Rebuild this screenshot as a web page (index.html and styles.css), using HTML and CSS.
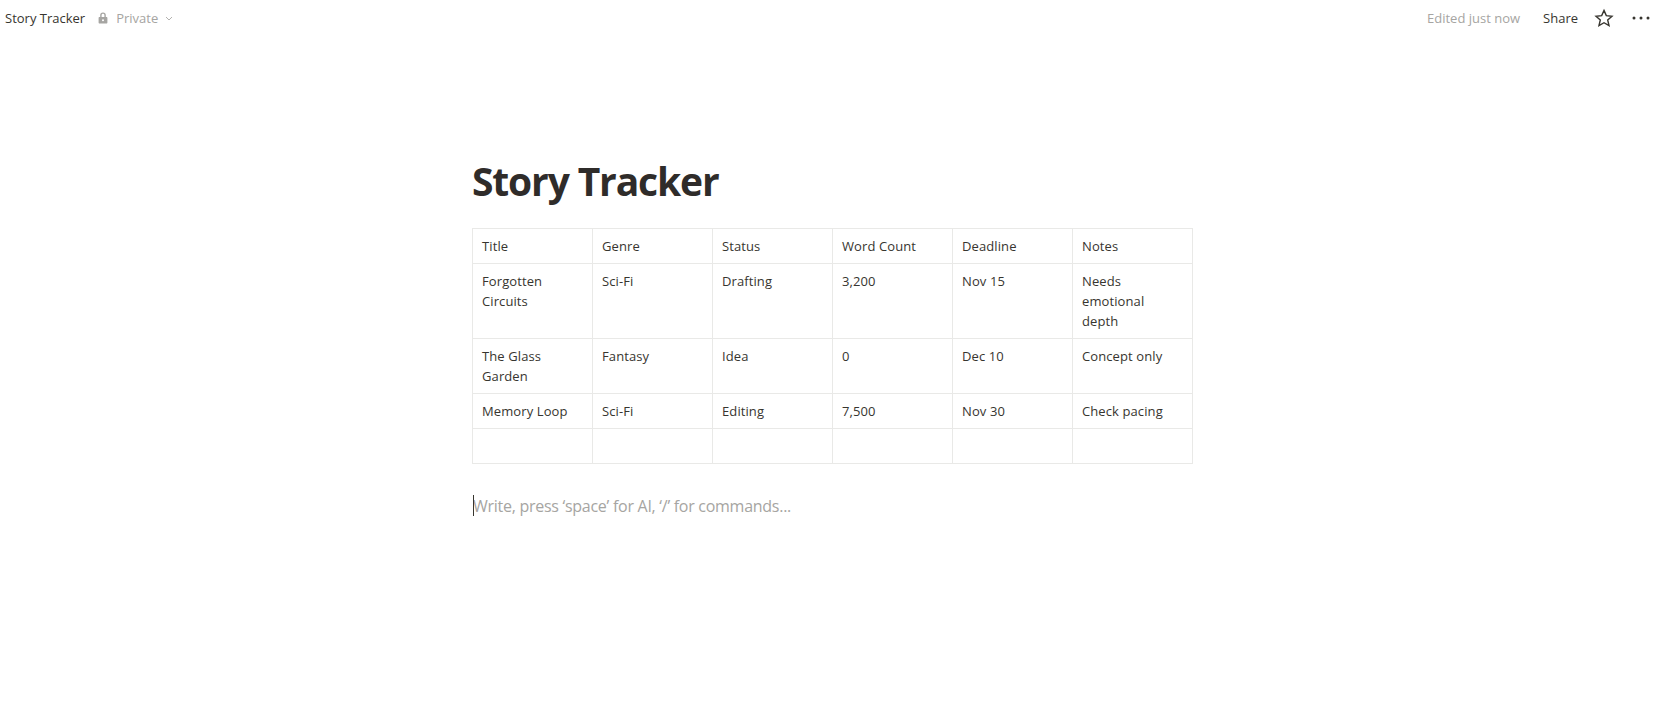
FILE: index.html
```html
<!DOCTYPE html>
<html lang="en">
<head>
<meta charset="utf-8">
<title>Story Tracker</title>
<link rel="stylesheet" href="styles.css">
</head>
<body>
<header class="topbar">
  <div class="crumbs">
    <span class="crumb-title">Story Tracker</span>
    <span class="privacy">
      <svg class="lock" viewBox="0 0 12 14" width="12" height="14"><path d="M3.2 6V4.2a2.8 2.8 0 0 1 5.6 0V6h.6c.6 0 1 .4 1 1v4.6c0 .6-.4 1-1 1H2.6c-.6 0-1-.4-1-1V7c0-.6.4-1 1-1h.6zm1.4 0h2.8V4.2a1.4 1.4 0 0 0-2.8 0V6z" fill="#a6a5a2"/><circle cx="6" cy="9.2" r="1" fill="#fff"/></svg>
      <span>Private</span>
      <svg class="chev" viewBox="0 0 8 5" width="8" height="5"><path d="M1 1l3 3 3-3" fill="none" stroke="#b3b2af" stroke-width="1"/></svg>
    </span>
  </div>
  <div class="actions">
    <span class="edited">Edited just now</span>
    <span class="share">Share</span>
    <svg class="star" viewBox="0 0 20 20" width="20" height="20"><path d="M10 2.4l2.3 5.2 5.7.6-4.3 3.8 1.3 5.6-5-2.9-5 2.9 1.3-5.6L2 8.2l5.7-.6z" fill="none" stroke="#37352f" stroke-width="1.4" stroke-linejoin="miter"/></svg>
    <svg class="more" viewBox="0 0 18 4" width="18" height="4"><circle cx="2" cy="2" r="1.5" fill="#37352f"/><circle cx="9" cy="2" r="1.5" fill="#37352f"/><circle cx="16" cy="2" r="1.5" fill="#37352f"/></svg>
  </div>
</header>
<main class="page">
  <h1 class="title">Story Tracker</h1>
  <table class="tracker">
    <tr><td>Title</td><td>Genre</td><td>Status</td><td>Word Count</td><td>Deadline</td><td>Notes</td></tr>
    <tr><td>Forgotten Circuits</td><td>Sci-Fi</td><td>Drafting</td><td>3,200</td><td>Nov 15</td><td>Needs emotional depth</td></tr>
    <tr><td>The Glass Garden</td><td>Fantasy</td><td>Idea</td><td>0</td><td>Dec 10</td><td>Concept only</td></tr>
    <tr><td>Memory Loop</td><td>Sci-Fi</td><td>Editing</td><td>7,500</td><td>Nov 30</td><td>Check pacing</td></tr>
    <tr class="blank"><td></td><td></td><td></td><td></td><td></td><td></td></tr>
  </table>
  <p class="placeholder"><span class="caret"></span>Write, press ‘space’ for AI, ‘/’ for commands...</p>
</main>
</body>
</html>
```

FILE: styles.css
```css
* { box-sizing: border-box; }
html, body { margin: 0; height: 100%; background: #fff; overflow: hidden; }
body { font-family: "Open Sans", "Noto Sans", sans-serif; color: #37352f; }
.topbar {
  display: flex;
  justify-content: space-between;
  align-items: center;
  height: 36px;
  padding: 0 17px 0 5px;
  font-size: 13px;
  letter-spacing: 0;
}
.crumbs, .privacy, .actions { display: flex; align-items: center; }
.crumb-title { color: #37352f; }
.privacy { margin-left: 12px; color: #a6a5a2; gap: 7px; }
.chev { margin-left: 0; }
.edited { color: #a6a5a2; }
.share { margin-left: 23px; }
.star { margin-left: 16px; }
.more { margin-left: 18px; }
.page { width: 722px; margin: 0 0 0 472px; }
.title {
  margin: 117px 0 0;
  height: 75px;
  font-size: 39px;
  line-height: 56px;
  font-weight: 700;
  letter-spacing: -1.15px;
  color: #2f2c2a;
}
.tracker {
  border-collapse: collapse;
  table-layout: fixed;
  width: 721px;
  font-size: 13px;
  letter-spacing: 0.1px;
  line-height: 20px;
}
.tracker td {
  width: 120px;
  padding: 7px 9px;
  border: 1px solid #e9e9e7;
  vertical-align: top;
  color: #37352f;
}
.blank td { height: 35px; }
.placeholder {
  position: relative;
  margin: 29px 0 0 1px;
  font-size: 16px;
  line-height: 26px;
  letter-spacing: -0.27px;
  color: #a6a5a2;
}
.caret {
  position: absolute;
  left: 0;
  top: 2px;
  width: 1px;
  height: 21px;
  background: #37352f;
}
```
